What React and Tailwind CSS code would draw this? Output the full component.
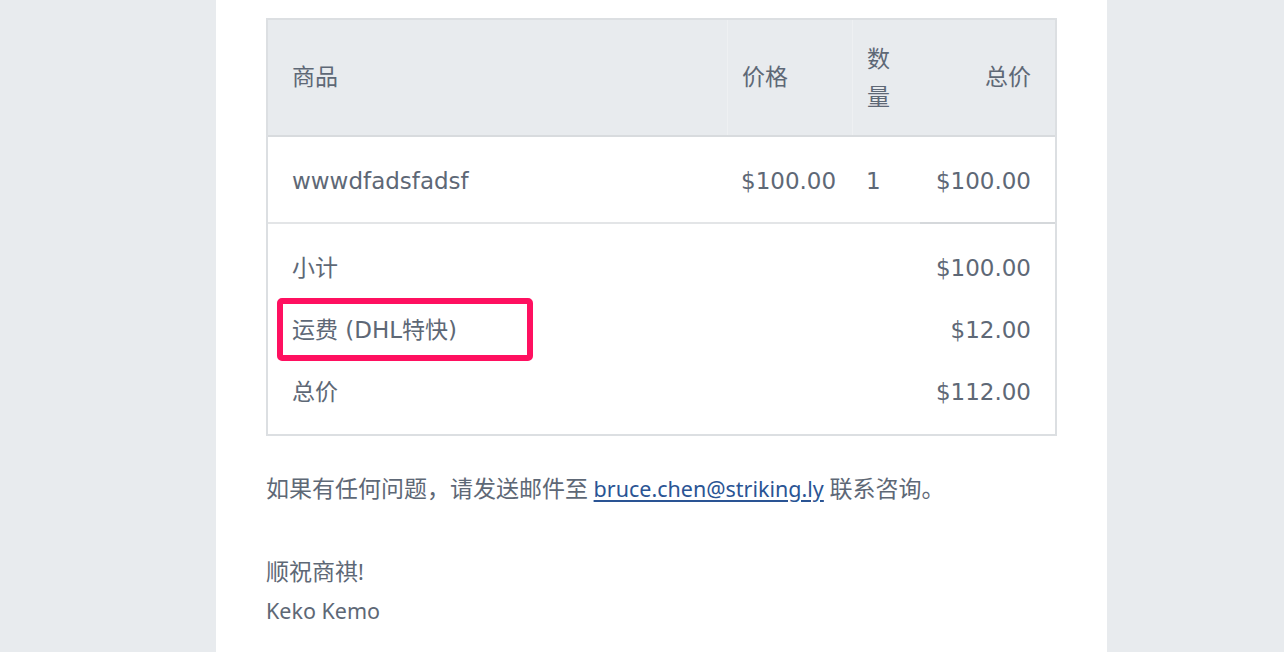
import React from "react"

const tableFont = {
  fontFamily: '"DejaVu Sans", "Noto Sans CJK SC", sans-serif',
}
const bodyFont = {
  fontFamily: '"Noto Sans", "Noto Sans CJK SC", sans-serif',
}

function SummaryRow({ label, value }) {
  return (
    <div className="flex items-center justify-between h-[62px] px-[24px]">
      <span>{label}</span>
      <span>{value}</span>
    </div>
  )
}

export default function App() {
  return (
    <div className="min-h-[652px] bg-[#e8ebee] overflow-hidden">
      <div className="ml-[216px] w-[891px] bg-white min-h-[652px] pt-[18px] px-[50px] pb-[40px] text-[#5e6876]">
        {/* Order table */}
        <div className="relative border-2 border-[#dcdfe2] text-[23px]" style={tableFont}>
          <div className="grid grid-cols-[459px_125px_68px_1fr] bg-[#e8ebee] h-[117px] border-b-2 border-[#d8dbde]">
            <div className="flex items-center pl-[24px]">商品</div>
            <div className="flex items-center pl-[14px] border-l border-[#eef0f2]">价格</div>
            <div className="flex items-center pl-[14px] border-l border-[#eef0f2] leading-[38px]">
              <span className="w-[26px]">数量</span>
            </div>
            <div className="flex items-center justify-end pr-[24px]">总价</div>
          </div>

          <div className="grid grid-cols-[459px_125px_68px_1fr] h-[87px]">
            <div className="flex items-center pl-[24px] pt-[3px] border-b-2 border-[#e3e5e7]">wwwdfadsfadsf</div>
            <div className="flex items-center pl-[14px] pt-[3px] border-b-2 border-[#e3e5e7]">$100.00</div>
            <div className="flex items-center pl-[14px] pt-[3px] border-b-2 border-[#e3e5e7]">1</div>
            <div className="flex items-center justify-end pr-[24px] pt-[3px] border-b-2 border-[#d5d8db]">$100.00</div>
          </div>

          <div className="pt-[13px] pb-[11px]">
            <SummaryRow label="小计" value="$100.00" />
            <SummaryRow label="运费 (DHL特快)" value="$12.00" />
            <SummaryRow label="总价" value="$112.00" />
          </div>

          {/* highlight annotation */}
          <div className="absolute left-[9px] top-[278px] w-[256px] h-[63px] border-[6px] border-[#ff1060] rounded-[5px] pointer-events-none" />
        </div>

        <div className="text-[21.5px] leading-[40px]" style={bodyFont}>
          <p className="mt-[32px]">
            <span className="text-[23px]">如果有任何问题，请发送邮件至</span>{" "}
            <a href="#" className="text-[#2a5494] underline underline-offset-[3px]">
              bruce.chen@striking.ly
            </a>{" "}
            <span className="text-[23px]">联系咨询。</span>
          </p>
          <p className="mt-[42px]">
            <span className="text-[23px]">顺祝商祺</span>!
          </p>
          <p className="-mt-[1px]">Keko Kemo</p>
        </div>
      </div>
    </div>
  )
}
